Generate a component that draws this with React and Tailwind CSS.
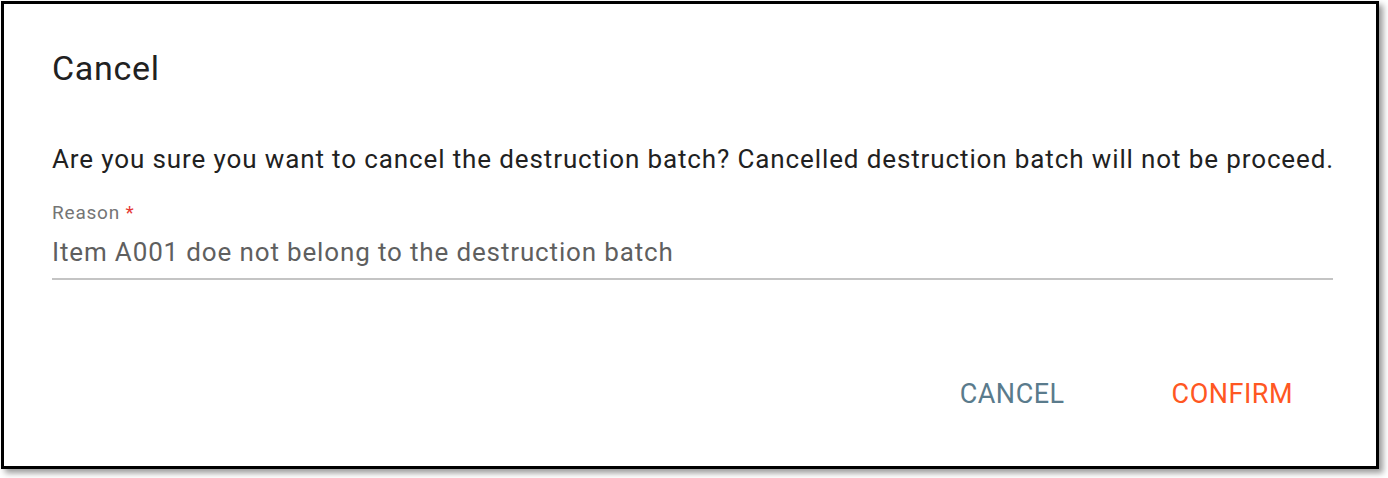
export default function App() {
  return (
    <div className="w-[1388px] h-[478px] bg-white pt-[1px] pl-[1px]" style={{ fontFamily: "Roboto, 'Liberation Sans', sans-serif" }}>
      <div className="box-border w-[1378px] h-[468px] border-[3px] border-black bg-white shadow-[4px_4px_6px_rgba(0,0,0,0.4)] pl-[48px] pr-[43px] pt-[44px] flex flex-col">
        {/* Title */}
        <h2 className="text-[34px] leading-[40px] tracking-[0.7px] text-[#212121]">Cancel</h2>

        {/* Message */}
        <p className="mt-[56px] text-[26px] leading-[30px] tracking-[0.88px] text-[#212121] whitespace-nowrap">
          Are you sure you want to cancel the destruction batch? Cancelled destruction batch will not be proceed.
        </p>

        {/* Reason field */}
        <div className="mt-[28px]">
          <label className="block text-[19px] leading-[22px] tracking-[0.8px] text-[#757575]">
            Reason <span className="text-[#e53935]">*</span>
          </label>
          <div className="mt-[12px] pb-[10px] border-b-2 border-[#c4c4c4] text-[26px] leading-[32px] tracking-[0.85px] text-[#5f5f5f]">
            Item A001 doe not belong to the destruction batch
          </div>
        </div>

        {/* Actions */}
        <div className="mt-auto mb-[56px] flex justify-end gap-[107px] pr-[40px]">
          <button className="text-[27px] leading-[32px] tracking-[0.5px] text-[#5a7b8c]">CANCEL</button>
          <button className="text-[27px] leading-[32px] tracking-[0.5px] text-[#ff5722]">CONFIRM</button>
        </div>
      </div>
    </div>
  );
}
